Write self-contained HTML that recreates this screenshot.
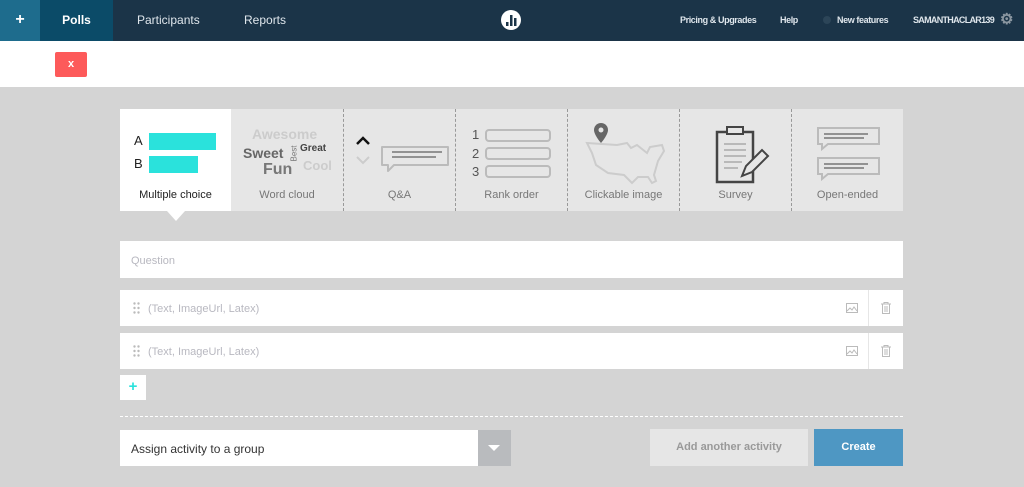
<!DOCTYPE html>
<html><head><style>
*{margin:0;padding:0;box-sizing:border-box}
body{width:1024px;height:487px;background:#d4d4d4;font-family:"Liberation Sans",sans-serif;position:relative;overflow:hidden}
.a{position:absolute}
.nav{left:0;top:0;width:1024px;height:41px;background:#1b3448;color:#dfe6ec;font-size:12px;font-weight:bold}
.white{left:0;top:41px;width:1024px;height:46px;background:#fff}
.tile{position:absolute;top:109px;height:102px;width:112px;background:#e6e6e6;font-size:11px;color:#777;text-align:center}
.tile .lbl{position:absolute;left:0;right:0;top:80px}
.sep{border-left:1px dashed #999}
.inp{background:#fff;color:#b8b8c0;font-size:11px}
.sm{font-size:9px;letter-spacing:-0.4px}
</style></head><body>
<div class="a nav">
 <div class="a" style="left:0;top:0;width:40px;height:41px;background:#1e6c8d;color:#fff;font-size:16px;text-align:center;line-height:39px">+</div>
 <div class="a" style="left:40px;top:0;width:73px;height:41px;background:#0b4b68;color:#fff;text-align:center;line-height:40px">Polls</div>
 <div class="a" style="left:137px;top:13px;font-weight:normal">Participants</div>
 <div class="a" style="left:244px;top:13px;font-weight:normal">Reports</div>
 <svg class="a" style="left:501px;top:10px" width="20" height="20"><circle cx="10" cy="10" r="10" fill="#fff"/><rect x="5" y="12" width="2.5" height="4" fill="#1b3448"/><rect x="9" y="5" width="2.5" height="11" fill="#1b3448"/><rect x="13" y="8" width="2.5" height="8" fill="#1b3448"/></svg>
 <div class="a sm" style="left:680px;top:15px">Pricing &amp; Upgrades</div>
 <div class="a sm" style="left:780px;top:15px">Help</div>
 <div class="a" style="left:823px;top:16px;width:8px;height:8px;border-radius:50%;background:#2c4558"></div>
 <div class="a sm" style="left:837px;top:15px">New features</div>
 <div class="a sm" style="left:913px;top:15px;letter-spacing:-0.7px">SAMANTHACLAR139</div>
 <div class="a" style="left:1000px;top:10px;font-size:15px;color:#8a96a0">⚙</div>
</div>
<div class="a white"></div>
<div class="a" style="left:55px;top:52px;width:32px;height:25px;background:#fd5a5a;border-radius:2px;color:#fff;font-size:11px;font-weight:bold;text-align:center;line-height:25px">x</div>

<div class="tile" style="left:120px;background:#fff;width:111px;color:#222">
 <div class="a" style="left:14px;top:24px;font-size:13px">A</div><div class="a" style="left:29px;top:24px;width:67px;height:17px;background:#2ae2dc"></div>
 <div class="a" style="left:14px;top:47px;font-size:13px">B</div><div class="a" style="left:29px;top:47px;width:49px;height:17px;background:#2ae2dc"></div>
 <div class="lbl">Multiple choice</div>
</div>
<div class="a" style="left:167px;top:211px;border-left:9px solid transparent;border-right:9px solid transparent;border-top:10px solid #fff"></div>
<div class="tile" style="left:231px">
 <div class="a" style="left:21px;top:17px;font-size:14px;font-weight:bold;color:#ccc">Awesome</div>
 <div class="a" style="left:12px;top:36px;font-size:14px;font-weight:bold;color:#666">Sweet</div>
 <div class="a" style="left:69px;top:34px;font-size:10px;font-weight:bold;color:#444">Great</div>
 <div class="a" style="left:72px;top:49px;font-size:13px;font-weight:bold;color:#ccc">Cool</div>
 <div class="a" style="left:55px;top:40px;font-size:8px;color:#777;transform:rotate(-90deg)">Best</div>
 <div class="a" style="left:32px;top:52px;font-size:16px;font-weight:bold;color:#777">Fun</div>
 <div class="lbl">Word cloud</div>
</div>
<div class="tile sep" style="left:343px">
 <svg class="a" style="left:8px;top:26px" width="100" height="40"><path d="M5 9l6-6 6 6" stroke="#111" stroke-width="2.5" fill="none"/><path d="M5 22l6 6 6-6" stroke="#ccc" stroke-width="2" fill="none"/><path d="M30 12h66v18H42l-6 6v-6h-6z" stroke="#bbb" stroke-width="2" fill="none" stroke-linejoin="round"/><path d="M40 17h50M40 22h44" stroke="#777" stroke-width="1.5"/></svg>
 <div class="lbl">Q&amp;A</div>
</div>
<div class="tile sep" style="left:455px">
 <svg class="a" style="left:16px;top:18px" width="84" height="56"><g font-size="13" fill="#555" font-family="Liberation Sans"><text x="0" y="12">1</text><text x="0" y="31">2</text><text x="0" y="49">3</text></g><g stroke="#bbb" stroke-width="2" fill="none"><rect x="14" y="3" width="64" height="11" rx="3"/><rect x="14" y="21" width="64" height="11" rx="3"/><rect x="14" y="39" width="64" height="11" rx="3"/></g></svg>
 <div class="lbl">Rank order</div>
</div>
<div class="tile sep" style="left:567px">
 <svg class="a" style="left:15px;top:14px" width="85" height="62"><path d="M4 20l30 2 10-2 4 5 6-3 10 8 3-6 12-2 2 6-6 10-4 14 2 6-4 2-4-6-10 0-6 6-8-8-16-2-12-8-4-12z" stroke="#ccc" stroke-width="2" fill="none"/><path d="M18 0a7 7 0 0 1 7 7c0 5-7 13-7 13s-7-8-7-13a7 7 0 0 1 7-7z" fill="#666"/><circle cx="18" cy="7" r="2.5" fill="#e6e6e6"/></svg>
 <div class="lbl">Clickable image</div>
</div>
<div class="tile sep" style="left:679px">
 <svg class="a" style="left:34px;top:15px" width="60" height="62"><rect x="3" y="8" width="36" height="50" stroke="#444" stroke-width="2.5" fill="none"/><rect x="13" y="3" width="16" height="7" stroke="#444" stroke-width="2" fill="#e6e6e6"/><path d="M10 20h22M10 26h22M10 32h22M10 38h18M10 44h14" stroke="#aaa" stroke-width="1.5"/><path d="M28 52l4-10 16-16 6 6-16 16z" stroke="#444" stroke-width="2" fill="#e6e6e6"/></svg>
 <div class="lbl">Survey</div>
</div>
<div class="tile sep" style="left:791px">
 <svg class="a" style="left:22px;top:17px" width="70" height="58"><g stroke="#bbb" stroke-width="2" fill="none"><path d="M4 2h61v16H14l-6 5v-5H4z"/><path d="M4 32h61v16H14l-6 5v-5H4z"/></g><path d="M10 8h44M10 12h40M10 38h44M10 42h40" stroke="#777" stroke-width="1.5"/></svg>
 <div class="lbl">Open-ended</div>
</div>

<div class="a inp" style="left:120px;top:241px;width:783px;height:37px;padding:14px 11px">Question</div>
<div class="a inp" style="left:120px;top:290px;width:783px;height:36px;padding:13px 0 0 28px">(Text, ImageUrl, Latex)
 <svg class="a" style="left:13px;top:12px" width="8" height="12"><g fill="#bbb"><circle cx="1.5" cy="1.5" r="1.2"/><circle cx="5.5" cy="1.5" r="1.2"/><circle cx="1.5" cy="6" r="1.2"/><circle cx="5.5" cy="6" r="1.2"/><circle cx="1.5" cy="10.5" r="1.2"/><circle cx="5.5" cy="10.5" r="1.2"/></g></svg>
 <div class="a" style="left:748px;top:0;width:1px;height:36px;background:#e6e6e6"></div>
 <svg class="a" style="left:726px;top:13px" width="12" height="10"><rect x="0.5" y="0.5" width="11" height="9" fill="none" stroke="#bbb"/><path d="M1 8l3-3 2 2 2-3 3 4" stroke="#bbb" fill="none"/></svg>
 <svg class="a" style="left:761px;top:12px" width="10" height="12"><path d="M0 2h10M3 2V0.5h4V2M1.5 2.5v9h7v-9M4 4v6M6 4v6" stroke="#bbb" fill="none"/></svg>
</div>
<div class="a inp" style="left:120px;top:333px;width:783px;height:36px;padding:13px 0 0 28px">(Text, ImageUrl, Latex)
 <svg class="a" style="left:13px;top:12px" width="8" height="12"><g fill="#bbb"><circle cx="1.5" cy="1.5" r="1.2"/><circle cx="5.5" cy="1.5" r="1.2"/><circle cx="1.5" cy="6" r="1.2"/><circle cx="5.5" cy="6" r="1.2"/><circle cx="1.5" cy="10.5" r="1.2"/><circle cx="5.5" cy="10.5" r="1.2"/></g></svg>
 <div class="a" style="left:748px;top:0;width:1px;height:36px;background:#e6e6e6"></div>
 <svg class="a" style="left:726px;top:13px" width="12" height="10"><rect x="0.5" y="0.5" width="11" height="9" fill="none" stroke="#bbb"/><path d="M1 8l3-3 2 2 2-3 3 4" stroke="#bbb" fill="none"/></svg>
 <svg class="a" style="left:761px;top:12px" width="10" height="12"><path d="M0 2h10M3 2V0.5h4V2M1.5 2.5v9h7v-9M4 4v6M6 4v6" stroke="#bbb" fill="none"/></svg>
</div>
<div class="a" style="left:120px;top:375px;width:26px;height:25px;background:#fff;color:#2ae2dc;font-weight:bold;font-size:15px;text-align:center;line-height:24px">+</div>
<div class="a" style="left:120px;top:416px;width:783px;border-top:1px dashed #fff"></div>
<div class="a" style="left:120px;top:430px;width:358px;height:36px;background:#fff;font-size:12px;color:#333;padding:12px 11px">Assign activity to a group</div>
<div class="a" style="left:478px;top:430px;width:33px;height:36px;background:#b9bbbe"><div class="a" style="left:10px;top:15px;border-left:6px solid transparent;border-right:6px solid transparent;border-top:6px solid #fff"></div></div>
<div class="a" style="left:650px;top:429px;width:158px;height:37px;background:#e6e6e6;color:#999;font-size:11px;font-weight:bold;text-align:center;line-height:37px">Add another activity</div>
<div class="a" style="left:814px;top:429px;width:89px;height:37px;background:#4e97c3;color:#fff;font-size:11px;font-weight:bold;text-align:center;line-height:37px">Create</div>
</body></html>
